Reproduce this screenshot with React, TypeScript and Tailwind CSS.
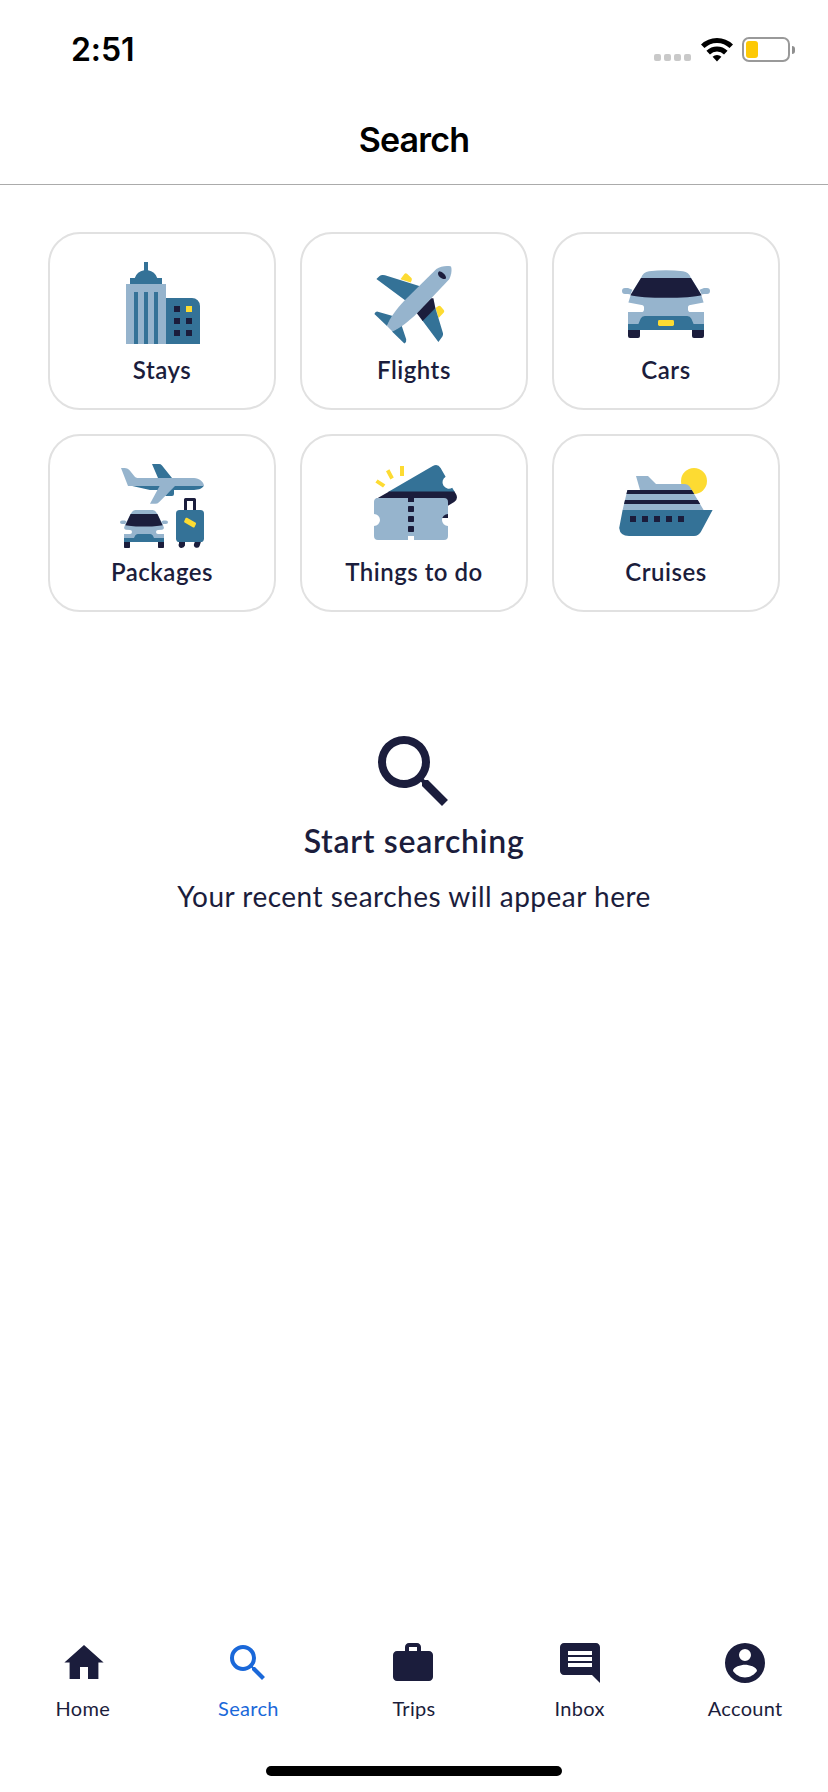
import React from 'react';
import { MdComment, MdSearch, MdWork } from 'react-icons/md';

const StaysIcon = () => (
  <svg viewBox="0 0 48 48" className="w-24 h-24">
    <path fill="#347297" d="M15 3h2v4.1A5.8 5.8 0 0 1 21.6 11H24v3H8v-3h2.4A5.8 5.8 0 0 1 15 7.1z" />
    <path fill="#96b4cd" d="M6 14h20v30H6z" />
    <path fill="#347297" d="M10 18h2v26h-2zM15 18h2v26h-2zM20 18h2v26h-2zM26 21h13a4 4 0 0 1 4 4v19H26z" />
    <path fill="#1b1d3c" d="M30 25h3v3h-3zM30 31h3v3h-3zM36 31h3v3h-3zM30 37h3v3h-3zM36 37h3v3h-3z" />
    <path fill="#fddb32" d="M36 25h3v3h-3z" />
  </svg>
);

const FlightsIcon = () => (
  <svg viewBox="0 0 48 48" className="w-24 h-24">
    <path fill="#fddb32" d="M17.2 11.6l2-2.6q.6-.7 1.3-.1l2.1 2q.5.5.3 1.1l-.5 1.2zM34.8 26l1.4-1q.6-.4 1.1.1l1.6 1.9q.5.6 0 1.200L36.3 31z" />
    <path fill="#347297" d="M5.2 11.5l1.6-1.5q.7-.6 1.7-.5l1 .1L27 15.1l-7.3 7.1zM34.7 26l3.8 12.6q.2.8-.3 1.6L36.2 43 28 32zM4.2 29q.4-1.3 1.3-1.3L13.4 30l-2.9 5zM13 37.7l4.8-3L20.1 41.6q.3 1.3-.9 2.2z" />
    <path fill="#1b1d3c" d="M25.3 28.5l7.3-7.4h1.1l1 5-6.4 6.4z" />
    <path fill="#96b4cd" d="M10.5 35C11.5 31.5 15.5 26 19.5 22L35.2 6.5C37.2 5 40.5 4.7 42.5 5.2c.7 2-.1 5-1 6.5L25.4 28.7c-3 3-9 7.9-12.2 9z" />
    <path fill="#1b1d3c" d="M36 8.9c0-.8.4-1.3 1-1.2 1.4.3 2.8 1.7 3 3 .1.7-.6 1-1.4.8C37 11 36 9.8 36 8.9z" />
  </svg>
);

const CarsIcon = () => (
  <svg viewBox="0 0 48 48" className="w-24 h-24">
    <path fill="#96b4cd" d="M11.5 11c.8-2 2-3.2 4-3.4 5.5-.6 11.5-.6 17 0 2 .2 3.2 1.4 4 3.4L41.5 19l1.3 4.2-6.6 1.3c-.8.1-1.2.5-1.2 1.2v1c0 .8.5 1.3 1.3 1.3H43v7H5v-7h6.7c.8 0 1.3-.5 1.3-1.3v-1c0-.7-.4-1.1-1.2-1.2L5.2 23.2 6.5 19z" />
    <path fill="#96b4cd" d="M3.5 16H5l2.2.9-1 2.4L5 19H3.5a1.5 1.5 0 0 1 0-3zM44.5 16H43l-2.2.9 1 2.4L43 19h1.5a1.5 1.5 0 0 0 0-3z" />
    <path fill="#1b1d3c" d="M11.5 11h25l5.3 8.6C36.5 21.3 11.5 21.3 6.2 19.6zM5 37h6v3a1 1 0 0 1-1 1H6a1 1 0 0 1-1-1zM37 37h6v3a1 1 0 0 1-1 1h-4a1 1 0 0 1-1-1z" />
    <path fill="#347297" d="M5 34h5.2l1.1-2.6q.6-1.4 2.1-1.4h21.2q1.5 0 2.1 1.4l1.1 2.6H43v3H5z" />
    <rect fill="#fddb32" x="20" y="32" width="8" height="3" rx=".7" />
  </svg>
);

const PackagesIcon = () => (
  <svg viewBox="0 0 48 48" className="w-24 h-24">
    <path fill="#347297" d="M19 3h3.5q.9 0 1.5.7L29 10h-7zM8 13.8L18 16h10L25.5 19H29q1 0 1-1v-2h10c2.5 0 4.5-.8 4.9-2.2z" />
    <path fill="#96b4cd" d="M3.5 5h1.7c1.2 0 2.2.5 2.9 1.5L10.3 9.3q.5.7 1.4.7H40c2.5 0 5 2 5 4H30.5l-8 8.1q-.8.8-1.8.8H18L22.8 14H7z" />
    <path fill="#96b4cd" d="M8.3 28L9.2 26.8q.5-.8 1.5-.8h8.6q1 0 1.5.8l.9 1.2L24.5 33.5l.5 1.500q-.3.900-1 .9L22 36q-1 0-1 1t1 1h3v2.500H5V38h3q1 0 1-1t-1-1l-2-.1q-.7 0-1-.9l.5-1.500zM4 31.300h1.500l.7.400-.6 1.300H4q-1 0-1-.85t1-.85zM26 31.300h-1.500l-.7.400.6 1.300H26q1 0 1-.85t-1-.85z" />
    <path fill="#1b1d3c" d="M8.3 28h13.4l2.6 5.6c-4 .9-14.6.9-18.6 0zM5 42h3v2.6q0 .4-.4.4H5.4Q5 45 5 44.600zM22 42h3v2.600q0 .4-.4.400h-2.200q-.4 0-.4-.4z" />
    <path fill="#347297" d="M5 40h5l.6-1.2q.4-.8 1.3-.8h6.2q.9 0 1.3.8L20 40h5v2H5z" />
    <path fill="none" stroke="#1b1d3c" strokeWidth="1.5" strokeLinejoin="round" d="M35.75 26v-5.25h4.5V26" />
    <path fill="#1b1d3c" d="M32.5 41.8h3v2q-.5 1.2-1.7 1.2a1.5 1.5 0 0 1-1.3-2.3zM43.5 41.8h-3l-.5 1.2a1.5 1.5 0 1 0 2.9.8z" />
    <rect fill="#347297" x="31" y="26" width="14" height="16" rx="1.8" />
    <path fill="#fddb32" d="M35.8 30q.3-.3.7-.1l4.2 2.4q.4.2.3.7l-.7 1.5q-.3.4-.7.2l-4.3-2.4q-.4-.3-.2-.7z" />
  </svg>
);

const ThingsIcon = () => (
  <svg viewBox="0 0 48 48" className="w-24 h-24">
    <path fill="#fddb32" d="M17 4h2v5h-2zM10 6.6l1.7-1 2.2 4.1-1.7 1zM4.7 12.2l1.1-1.5 3.9 2.5-1.2 1.6z" />
    <path fill="#347297" d="M11 17L33.4 4q2.5-1.3 3.9 1l2.5 4.4a3.2 3.2 0 1 0 3.3 5.5L44.4 17z" />
    <path fill="#1b1d3c" d="M11.6 16.7h32.6l.8 1.3q1.3 2.5-.9 4L41 23.9V30H20v-8L4.8 20.6z" />
    <path fill="#96b4cd" d="M6 20h15v19.5h3V20h15q2 0 2 2v6a3 3 0 0 0 0 6v5q0 2-2 2H24v-2h-3v2H6q-2 0-2-2v-5a3 3 0 0 0 0-6v-6q0-2 2-2z" />
    <path fill="#96b4cd" d="M20.5 22h4v17h-4z" />
    <path fill="#1b1d3c" d="M21 19.9h3v1.6q0 .5-.5.5h-2q-.5 0-.5-.5z" />
    <rect fill="#1b1d3c" x="21" y="24" width="3" height="3" rx=".4" />
    <rect fill="#1b1d3c" x="21" y="29" width="3" height="3" rx=".4" />
    <rect fill="#1b1d3c" x="21" y="34" width="3" height="3" rx=".4" />
    <path fill="#fff" d="M21 39h3v2h-3z" />
  </svg>
);

const CruisesIcon = () => (
  <svg viewBox="0 0 48 48" className="w-24 h-24">
    <circle fill="#fddb32" cx="38" cy="11.5" r="6.5" />
    <path fill="#96b4cd" d="M9 9h6l4 4h14.2q1.8 0 2.8 1.5L42.8 26H2.3L4.7 16H11z" />
    <path fill="#1b1d3c" d="M4.7 16h32.2l1.2 2H4.2zM3.5 21h36.4l1.2 2H3z" />
    <path fill="#347297" d="M2.3 26h45L41.6 36.6Q40.4 39 38 39H5.5Q1 39 .6 35z" />
    <path fill="#1b1d3c" d="M6 29h3v3H6zM12 29h3v3h-3zM18 29h3v3h-3zM24 29h3v3h-3zM30 29h3v3h-3z" />
  </svg>
);

const HomeIcon = () => (
  <svg viewBox="0 0 24 24" fill="currentColor" className="w-12 h-12 ml-0.5">
    <path d="M10 20v-6h4v6h5.2v-8.2h2.6L12 3 2.2 11.8h2.6V20z" />
  </svg>
);

const AccountIcon = () => (
  <svg viewBox="0 0 24 24" fill="currentColor" className="w-12 h-12">
    <path
      fillRule="evenodd"
      d="M12 2a10 10 0 1 0 0 20 10 10 0 0 0 0-20zM12 5a3 3 0 1 1 0 6 3 3 0 0 1 0-6zM12 12.9c2 0 6 1.1 6 3.1-1.3 1.9-3.500 3.200-6 3.200s-4.700-1.300-6-3.200c0-2 4-3.100 6-3.100z"
    />
  </svg>
);

const StatusBar = () => (
  <div className="h-[100px] flex items-start justify-between pl-[71px] pr-[33px]">
    <span className="font-['Inter'] font-semibold text-[32px] leading-10 tracking-[-0.1px] mt-[30px] text-black">2:51</span>
    <div className="flex items-end mt-[37px] h-[25px]">
      <div className="flex gap-[3px] pb-px mr-2.5">
        {[0, 1, 2, 3].map((dot) => (
          <div key={dot} className="w-[7px] h-[7px] rounded-[2px] bg-[#c9c9c9]" />
        ))}
      </div>
      <svg viewBox="0 0 32 25" className="w-8 h-[25px] mr-[9px]">
        <g fill="none" stroke="#000" strokeWidth="5">
          <path d="M1.7 9.3a20.3 20.3 0 0 1 28.6 0" />
          <path d="M7.2 15.6a12.5 12.5 0 0 1 17.6 0" />
        </g>
        <path d="M11.6 19.8a6.3 6.3 0 0 1 8.8 0L16 24.4z" />
      </svg>
      <div className="w-12 h-[25px] border-2 border-[#999] rounded-[7px] p-[2px]">
        <div className="w-[12px] h-[17px] rounded-[3px] bg-[#fdc906]" />
      </div>
      <div className="w-[3px] h-2 ml-0.5 mb-2 rounded-r-full bg-[#8f8f8f]" />
    </div>
  </div>
);

const categories = [
  { label: 'Stays', icon: StaysIcon },
  { label: 'Flights', icon: FlightsIcon },
  { label: 'Cars', icon: CarsIcon },
  { label: 'Packages', icon: PackagesIcon },
  { label: 'Things to do', icon: ThingsIcon },
  { label: 'Cruises', icon: CruisesIcon },
];

const tabs = [
  { label: 'Home', icon: <HomeIcon /> },
  { label: 'Search', icon: <MdSearch className="w-12 h-12" />, active: true },
  { label: 'Trips', icon: <MdWork className="w-12 h-12 -ml-0.5" /> },
  { label: 'Inbox', icon: <MdComment className="w-12 h-12" /> },
  { label: 'Account', icon: <AccountIcon /> },
];

const App: React.FC = () => {
  return (
    <div className="w-[828px] h-[1792px] flex flex-col bg-white text-[#1b1d3c] font-['Lato',sans-serif]">
      <StatusBar />

      <header className="h-[85px] flex justify-center border-b border-[#ababab]">
        <h1 className="font-['Inter'] font-semibold text-[34px] leading-[44px] tracking-[-0.8px] mt-[18px] text-black">Search</h1>
      </header>

      <main className="flex-1 pt-[47px] px-12">
        <div className="grid grid-cols-3 gap-6">
          {categories.map(({ label, icon: Icon }) => (
            <button
              key={label}
              className="h-[178px] flex flex-col items-center pt-[22px] border-2 border-[#e1e1e1] rounded-[32px]"
            >
              <Icon />
              <span className="text-2xl leading-8 font-semibold mt-0.5 tracking-[0.5px]">{label}</span>
            </button>
          ))}
        </div>

        <div className="flex flex-col items-center mt-28">
          <MdSearch className="w-24 h-24" />
          <h2 className="text-[32px] leading-10 font-semibold tracking-[0.7px] mt-px">Start searching</h2>
          <p className="text-[28px] leading-9 tracking-[0.5px] mt-[17px]">Your recent searches will appear here</p>
        </div>
      </main>

      <nav className="h-[153px] grid grid-cols-5 items-start">
        {tabs.map((tab) => (
          <button
            key={tab.label}
            className={`flex flex-col items-center ${tab.active ? 'text-[#1a68d9]' : ''}`}
          >
            {tab.icon}
            <span className="text-xl leading-6 mt-[9px] tracking-[0.3px]">{tab.label}</span>
          </button>
        ))}
      </nav>
      <div className="w-[296px] h-2.5 mx-auto mb-4 -mt-[26px] rounded-full bg-black" />
    </div>
  );
};

export default App;
